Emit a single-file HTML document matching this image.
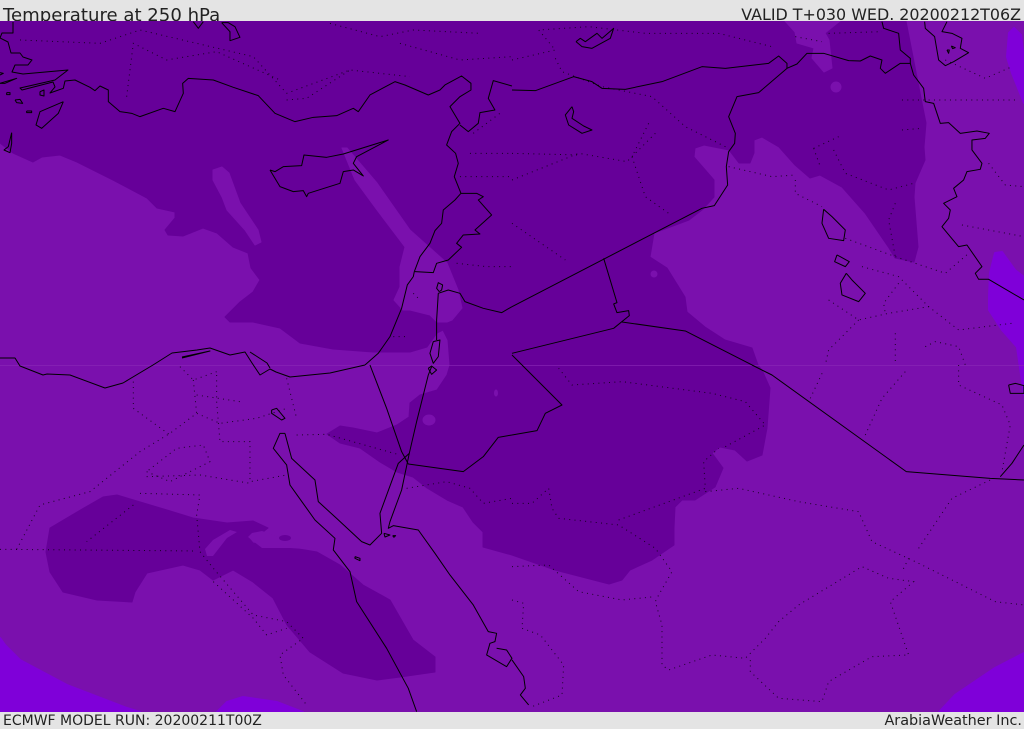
<!DOCTYPE html>
<html><head><meta charset="utf-8"><style>
html,body{margin:0;padding:0;background:#e4e4e4}
#w{position:relative;width:1024px;height:729px;overflow:hidden;font-family:"DejaVu Sans",sans-serif;color:#222}
#t{position:absolute;left:0;top:0;width:1024px;height:21px;background:#e4e4e4;overflow:hidden;z-index:2}
#t span{position:absolute;white-space:nowrap;line-height:22px}
#b{position:absolute;left:0;top:712px;width:1024px;height:17px;background:#e4e4e4;overflow:hidden;z-index:2}
#b span{position:absolute;top:1px;line-height:17px;white-space:nowrap}
svg{position:absolute;left:0;top:0}
.c polyline{fill:none;stroke:#000;stroke-width:3;stroke-linejoin:round}
.c .r polyline{stroke-width:1}
.d polyline{fill:none;stroke:#000;stroke-width:3;stroke-dasharray:3 13;stroke-linecap:butt;opacity:.8}
</style></head><body><div id="w">
<svg width="1024" height="729" viewBox="0 0 1024 729">
<rect x="0" y="21" width="1024" height="691" fill="#7a10ad"/>
<g fill="#7f00d9" stroke="#7f00d9" stroke-width="2" stroke-linejoin="round">
<polygon points="0,638 5,645 20,660 67,685 127,708 140,712 0,712"/>
<polygon points="217,712 227,702 243,697 277,702 303,712"/>
<polygon points="939,712 955,695 995,668 1024,653 1024,712"/>
<polygon points="1009,33 1014,28 1021,35 1024,60 1024,103 1012,73 1007,57"/>
<polygon points="989,297 990,273 995,253 1002,252 1015,270 1024,277 1024,365 1024,395 1017,347 1002,330 989,310"/>
</g>
<polygon fill="#660099" stroke="#660099" stroke-linejoin="round" points="0,143 13,153 33,162 42,157 60,155 77,162 113,180 147,198 157,208 175,212 175,218 165,230 168,235 183,236 203,228 217,233 233,247 248,253 251,268 260,280 253,292 240,302 225,317 230,322 253,322 280,328 300,343 333,349 373,352 410,352 427,347 437,333 443,330 448,340 450,365 447,375 437,390 420,395 410,403 409,417 397,425 377,433 353,428 340,426 327,434 340,443 360,448 380,462 397,472 413,477 427,488 447,500 463,507 473,522 483,532 483,547 512,555 555,570 609,584 622,580 630,570 652,560 674,545 674,528 675,507 682,500 695,500 715,487 723,468 712,453 720,447 735,450 747,461 762,455 767,428 770,388 762,370 758,365 752,348 725,340 705,327 687,312 685,297 667,268 650,257 654,233 689,220 702,210 714,197 714,180 694,157 695,148 704,145 729,150 739,163 750,163 754,153 754,140 762,137 779,147 795,165 810,178 820,175 842,187 865,213 889,248 895,258 914,262 918,247 914,197 915,183 925,160 924,147 926,123 922,103 906,21 0,21"/>
<g fill="#7a10ad" stroke="#7a10ad" stroke-linejoin="round">
<polygon points="785,21 795,32 797,43 814,48 812,58 824,72 832,68 829,40 825,33 840,21"/>
<ellipse cx="836" cy="87" rx="5" ry="5"/><ellipse cx="654" cy="274" rx="3" ry="3"/>
<ellipse cx="429" cy="420" rx="6" ry="5"/><ellipse cx="496" cy="393" rx="1.5" ry="3"/>
<polygon points="342,148 347,148 377,183 410,230 447,263 458,290 462,308 452,320 447,322 437,322 430,315 410,310 403,310 394,300 400,287 400,267 405,247 377,210 355,180"/>
<polygon points="213,170 222,167 229,173 240,203 258,230 261,242 255,245 245,230 227,210 222,197 213,180"/>
</g>
<polygon fill="#660099" stroke="#660099" stroke-linejoin="round" points="50,528 77,512 103,497 117,495 167,510 193,518 227,523 253,521 268,528 263,532 248,537 253,543 277,547 293,548 317,552 340,565 363,585 390,600 413,640 435,657 435,672 400,677 377,680 343,673 310,652 287,625 273,598 253,582 233,570 213,580 200,570 183,565 147,573 135,592 132,602 97,600 63,592 50,572 46,552"/>
<g fill="#7a10ad"><polygon points="205,549 213,540 230,530 237,532 227,538 213,556 207,556"/><polygon points="248,537 252,533 262,531 268,533 278,537 300,545 320,550 290,548 262,548"/></g>
<ellipse cx="285" cy="538" rx="6" ry="3" fill="#660099"/>
<rect x="0" y="365" width="1024" height="1" fill="#8a2ab8" opacity=".6"/>

<g class="d">
<g transform="translate(0,365) scale(.3333)">
<polyline points="0,553 590,558"/><polyline points="50,553 120,420 270,380 420,260 510,205 590,145 660,175 770,160 860,130"/>
<polyline points="400,50 400,130 510,210"/><polyline points="440,320 510,350 630,290 610,240 530,250 440,320"/>
<polyline points="420,385 600,390 590,450 600,560 640,610 760,750 860,770 910,820 840,870 850,930 920,1020"/>
<polyline points="400,420 260,530"/><polyline points="580,45 590,145"/><polyline points="650,30 650,110 660,230 750,230 750,350 860,330"/>
<polyline points="440,335 600,330 750,355"/><polyline points="890,210 980,208 1200,270"/><polyline points="1220,370 1340,350 1410,370 1450,415 1536,400"/><polyline points="640,650 760,760 800,810 860,790"/>
<polyline points="540,5 580,45 650,20"/><polyline points="860,40 890,160"/><polyline points="590,90 720,110"/>
</g>
<g transform="translate(512,365) scale(.3333)">
<polyline points="0,415 60,415 110,370 120,430 140,460 320,480 430,550 480,620 440,690 430,710 450,780 450,900 470,915 600,870 700,880 760,820 800,770 860,720 1050,605 1130,640 1205,650 1135,710 1190,870 1080,875 950,950 930,1010 800,1000 715,920 715,880"/>
<polyline points="320,465 580,370 575,290 620,250"/><polyline points="640,245 760,180 700,110 600,85 330,50 180,60 140,10"/>
<polyline points="580,380 680,370 860,410 1040,440 1080,530 1210,590 1290,630 1450,710 1536,720"/><polyline points="1220,550 1320,400 1435,345"/><polyline points="1190,580 1170,620"/>
<polyline points="1060,210 1110,100 1180,20"/><polyline points="895,100 935,15"/><polyline points="1340,0 1340,60 1470,120 1495,180 1470,320"/>
<polyline points="0,605 110,600 200,680 330,705 430,695"/><polyline points="0,705 35,715 30,790 85,810 155,900 150,990 60,1025"/>
</g>
<g transform="translate(512,0) scale(.3333)">
<polyline points="0,180 130,150 80,90 230,80 400,100 620,100 780,140"/><polyline points="130,175 150,215 270,260 420,290 520,380 650,445"/><polyline points="0,540 200,460 345,485 430,400"/><polyline points="0,460 200,465"/><polyline points="0,670 160,780"/>
<polyline points="410,370 360,470 400,590 470,640"/><polyline points="650,500 780,530 850,525"/><polyline points="850,540 850,580 930,620"/><polyline points="905,445 980,410"/><polyline points="905,445 925,500"/><polyline points="965,450 1000,520 1130,570 1205,550"/><polyline points="1150,610 1130,660 1150,770"/><polyline points="1000,715 1150,770 1300,820 1370,760"/><polyline points="1050,800 1160,830 1250,920 1340,990 1500,970"/><polyline points="950,900 1040,960 1130,940 1250,920"/><polyline points="1040,960 950,1050 940,1095"/><polyline points="1160,850 1115,910 1120,940"/><polyline points="1150,1000 1150,1095"/><polyline points="1240,1040 1270,1025 1340,1040 1360,1095"/><polyline points="1300,180 1420,235 1500,200"/><polyline points="1170,300 1510,300"/><polyline points="1350,675 1536,710"/><polyline points="1170,390 1230,385"/><polyline points="1430,490 1480,555 1536,560"/><polyline points="850,110 930,125"/><polyline points="950,100 1110,95"/>
</g>
<g transform="translate(0,0) scale(.3333)">
<polyline points="60,120 300,130 420,90 760,170 860,280 1050,210 1230,230"/><polyline points="380,290 400,130 500,180 650,155 840,240"/><polyline points="990,70 1140,110 1240,90 1440,100"/><polyline points="860,300 920,295 1050,210"/><polyline points="1200,130 1380,180 1536,170"/>
<polyline points="1420,400 1500,340"/><polyline points="1380,530 1536,530"/><polyline points="1370,790 1460,800 1536,800"/><polyline points="1410,460 1536,460"/><polyline points="1240,880 1260,900"/><polyline points="1180,1010 1220,1010"/>
</g>
</g>

<g class="c">
<g class="r">
<polyline points="0,358 15,358 20,366 43,375 47,374 70,375 105,388 123,383 153,365 172,353 197,350 210,348 230,355 245,352 252,363 260,375 270,369 276,372 290,377 330,373 365,365"/>
<polyline points="250,352 267,363 270,368"/>
<polyline points="182,357 210,351 182,358"/>
</g>
<g transform="translate(0,0) scale(.3333)">
<polyline points="39,66 39,99 6,99 0,114 24,126 33,159 60,159 69,171 96,180 84,195 45,195 36,216 69,222 204,210 165,240 100,255 60,264 66,270 159,246 165,261 150,279 190,265 195,243 225,240 270,262 285,272 300,258 325,270 325,305 360,335 395,340 420,350 490,325 525,335 550,280 548,250 565,235 640,240 700,262 775,287 825,340 885,365 940,352 1010,347 1060,325 1075,335 1110,285 1185,245 1215,255 1285,285 1320,270 1335,255 1385,228 1413,250 1413,270 1380,290 1350,320 1380,370 1355,395 1340,435 1367,460 1375,490 1363,530 1383,580 1365,600 1330,630 1325,670 1305,692 1290,730 1260,770 1243,815 1240,830 1222,855 1205,925 1170,1010 1135,1060 1095,1095"/>
<polyline points="1383,580 1430,580 1450,590 1435,600 1475,645 1425,690 1440,702 1390,705 1370,730 1385,742 1345,780 1310,790 1300,818 1245,815"/>
<polyline points="1380,375 1405,395 1435,370 1440,338 1485,330 1465,295 1480,242 1536,258"/>
<polyline points="1315,880 1310,960 1310,1020"/>
<polyline points="1315,880 1345,870 1380,880 1395,905 1450,925 1505,938 1536,920"/>
<polyline points="1318,875 1310,865 1315,848 1328,855 1325,870 1318,875"/>
<polyline points="1300,1025 1290,1060 1300,1090 1315,1070 1320,1020 1300,1025"/>
<polyline points="810,510 840,560 880,575 910,572 920,590 925,580 1020,550 1030,515 1060,510 1090,528 1060,490 1070,470 1165,420 1030,462 980,472 912,465 905,497 850,500 825,515 810,510"/>
<polyline points="190,305 120,335 108,375 125,385 175,340 190,305"/>
<polyline points="35,398 25,440 12,450 30,458 35,430 35,398"/>
<polyline points="580,65 595,85 610,65"/>
<polyline points="665,68 690,95 690,122 720,112 705,80 685,68 665,68"/>
<polyline points="0,250 50,235 15,250 0,250"/>
<polyline points="20,278 30,278 30,284 20,284 20,278"/><polyline points="45,300 60,298 68,310 50,308 45,300"/><polyline points="80,333 95,333 95,338 80,338 80,333"/><polyline points="120,275 132,270 132,288 120,285 120,275"/>
<polyline points="0,218 10,220 0,225"/>
</g>
<g transform="translate(512,0) scale(.3333)">
<polyline points="0,270 70,272 185,230 240,245 270,265 340,268 450,245 570,200 640,205 770,190 800,168 825,190 825,205 855,192 885,160 935,160 1010,182 1045,183 1075,168 1110,180 1105,205 1120,220 1165,190 1195,190 1205,225 1235,265 1240,305 1265,310 1285,370 1310,368 1345,400 1395,393 1432,400 1420,415 1380,420 1380,450 1410,490 1405,508 1365,515 1355,540 1325,565 1335,590 1295,610 1315,630 1310,655 1290,680 1340,740 1365,735 1410,800 1390,820 1400,838 1430,838 1536,900"/>
<polyline points="1110,65 1115,85 1160,100 1165,150 1195,175 1195,190"/>
<polyline points="1238,65 1240,85 1268,110 1280,180 1300,197 1325,185 1370,158 1345,145 1350,115 1320,100 1290,95 1305,65"/>
<polyline points="1305,150 1312,150 1310,160 1305,150"/><polyline points="1318,138 1330,143 1322,146 1318,138"/>
<polyline points="825,205 740,278 675,290 650,350 670,400 668,430 650,455 643,500 647,555 607,617 570,625 0,920"/>
<polyline points="275,775 315,908 305,912 315,938 350,932 352,947 305,985 0,1060"/>
<polyline points="330,966 520,993 720,1095"/>
<polyline points="0,1065 30,1095"/>
<polyline points="192,125 205,115 220,125 255,100 270,115 305,85 295,115 240,145 210,140 192,125"/>
<polyline points="180,320 160,345 170,375 210,400 240,390 215,378 180,355 185,335 180,320"/>
<polyline points="935,628 930,670 950,715 995,722 1000,690 960,650 935,628"/>
<polyline points="975,765 968,785 1000,800 1012,785 985,770 975,765"/>
<polyline points="1003,820 985,850 990,885 1040,905 1060,880 1020,840 1003,820"/>
</g>
<g transform="translate(512,365) scale(.3333)">
<polyline points="720,0 780,30 1183,320 1435,340 1536,345"/>
<polyline points="30,0 150,120 100,145 75,197 0,210"/>
<polyline points="1465,335 1500,295 1536,240"/>
<polyline points="0,885 35,935 40,970 25,990 50,1020"/>
<polyline points="1490,60 1510,55 1536,62 1536,85 1495,85 1490,60"/>
</g>
<g transform="translate(0,365) scale(.3333)">
<polyline points="1110,0 1160,130 1205,260 1225,297 1390,320 1450,275 1495,217 1536,210"/>
<polyline points="1295,5 1285,30 1250,170 1228,265 1205,375 1170,470 1165,490 1180,482 1255,495 1305,565 1350,630 1420,720 1465,800 1490,805 1485,830 1470,835 1460,870 1520,905 1536,880 1520,855 1490,850"/>
<polyline points="1285,10 1295,3 1310,15 1295,28 1285,10"/>
<polyline points="855,205 875,280 945,345 955,410 1010,460 1085,530 1110,540 1145,505 1140,445 1195,295 1228,265"/>
<polyline points="855,205 840,205 820,250 860,300 870,360 895,395 945,465 1005,520 1000,555 1050,620 1070,710 1160,850 1225,970 1250,1040"/>
<polyline points="815,135 830,130 855,160 845,165 815,145 815,135"/>
<polyline points="1065,575 1080,580 1080,587 1065,580 1065,575"/><polyline points="1152,505 1170,510 1155,516 1152,505"/><polyline points="1178,512 1187,512 1182,517 1178,512"/>
</g>
</g>
</svg>
<div id="t"><span style="left:3px;top:5px;font-size:18.1px">Temperature at 250 hPa</span><span style="right:3px;top:4px;font-size:15.9px">VALID T+030 WED. 20200212T06Z</span></div>
<div id="b"><span style="left:3px;font-size:14px">ECMWF MODEL RUN: 20200211T00Z</span><span style="right:2px;font-size:14.4px">ArabiaWeather Inc.</span></div>
</div></body></html>
